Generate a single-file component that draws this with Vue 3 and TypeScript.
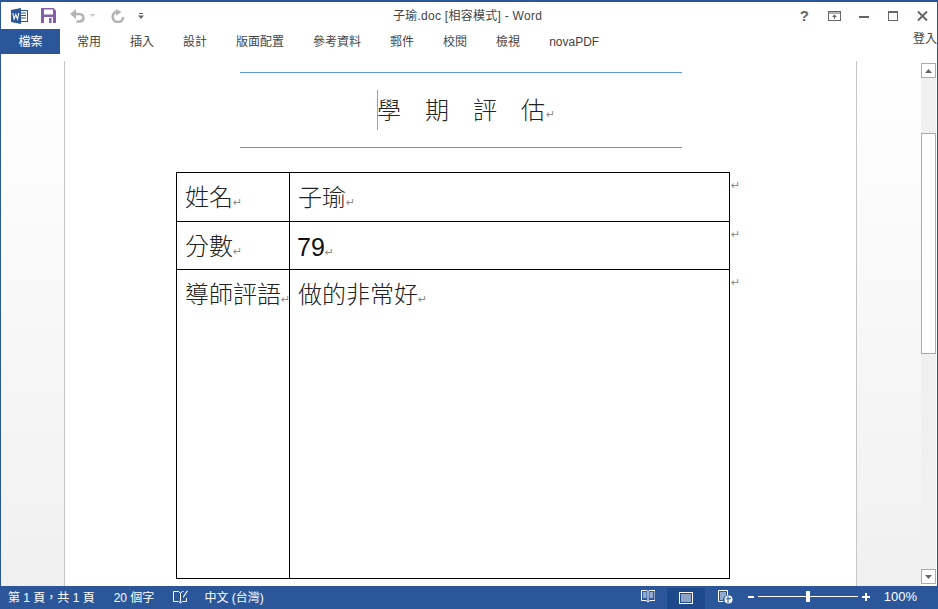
<script setup lang="ts">
const tabs: string[] = ['常用', '插入', '設計', '版面配置', '參考資料', '郵件', '校閱', '檢視', 'novaPDF']
const rows: { label: string; value: string; latin: boolean }[] = [
  { label: '姓名', value: '子瑜', latin: false },
  { label: '分數', value: '79', latin: true },
  { label: '導師評語', value: '做的非常好', latin: false },
]
const titleChars: string[] = ['學', '期', '評', '估']
</script>

<template>
  <div class="win">
    <header class="titlebar">
      <div class="qat">
        <svg class="ic-word" width="17" height="16" viewBox="0 0 17 16">
          <rect x="7.500" y="2.500" width="9" height="11" fill="#fff" stroke="#2b579a" />
          <path d="M10 5h5M10 7.500h5M10 10h5" stroke="#2b579a" />
          <path d="M0 2 10 0v16L0 14z" fill="#2b579a" />
          <path d="M1.800 5l1.300 6 1.700-4.500L6.500 11l1.300-6" fill="none" stroke="#fff" stroke-width="1.100" />
        </svg>
        <svg class="ic-save" width="15" height="15" viewBox="0 0 15 15">
          <path d="M0 0h12.500L15 2.500V15H0z" fill="#8560a8" />
          <rect x="3" y="1.500" width="9" height="5" fill="#fff" />
          <rect x="3" y="9" width="9" height="6" fill="#fff" />
          <rect x="8" y="10" width="2.500" height="5" fill="#8560a8" />
        </svg>
        <svg class="ic-undo" width="16" height="14" viewBox="0 0 16 14">
          <path d="M3 5h6.500a4 4 0 0 1 4 4v0a4 4 0 0 1-4 3.500H6.500" fill="none" stroke="#b3b3b3" stroke-width="2.600" />
          <path d="M6 0v10L0 5z" fill="#b3b3b3" />
        </svg>
        <svg class="ic-drop" width="5" height="3" viewBox="0 0 5 3"><path d="M0 0h5L2.500 3z" fill="#c4c4c4" /></svg>
        <svg class="ic-redo" width="14" height="14" viewBox="0 0 14 14">
          <path d="M6 2.500A5.300 5.300 0 1 0 12.300 8" fill="none" stroke="#b3b3b3" stroke-width="2.600" />
          <path d="M5 0v6.500l5.500-3.200z" fill="#b3b3b3" />
        </svg>
        <svg class="ic-custom" width="6" height="6" viewBox="0 0 6 6">
          <path d="M1 0h4v1H1z" fill="#666" /><path d="M0 2.500h6L3 6z" fill="#666" />
        </svg>
      </div>
      <div class="doc-title">子瑜.doc [相容模式] - Word</div>
      <div class="winctl">
        <span class="help">?</span>
        <svg class="ribbon" width="13" height="10" viewBox="0 0 13 10">
          <rect x=".5" y=".5" width="12" height="9" fill="none" stroke="#666" />
          <path d="M1 2h11" stroke="#666" />
          <path d="M6.500 3.500 9 6H4zM6 6h1v2H6z" fill="#666" />
        </svg>
        <svg width="10" height="2" viewBox="0 0 10 2" class="mini"><rect width="10" height="2" fill="#666" /></svg>
        <svg width="10" height="10" viewBox="0 0 10 10">
          <rect x=".5" y=".5" width="9" height="9" fill="none" stroke="#666" /><rect width="10" height="2" fill="#666" />
        </svg>
        <svg width="11" height="10" viewBox="0 0 11 10"><path d="M1 .5l9 9M10 .5l-9 9" stroke="#666" stroke-width="2" /></svg>
      </div>
    </header>

    <nav class="tabs">
      <div class="file-tab">檔案</div>
      <div class="tab-list">
        <span v-for="t in tabs" :key="t">{{ t }}</span>
      </div>
      <span class="signin">登入</span>
    </nav>

    <main class="workspace">
      <div class="gutter"></div>
      <section class="page">
        <div class="heading">
          <div class="caret-wrap">
            <span v-for="c in titleChars" :key="c" class="hchar">{{ c }}</span><span class="pm">↵</span>
          </div>
        </div>
        <table class="sheet">
          <tbody>
            <tr v-for="r in rows" :key="r.label">
              <td class="c1">{{ r.label }}<span class="pm">↵</span></td>
              <td class="c2" :class="{ latin: r.latin }">{{ r.value }}<span class="pm">↵</span></td>
              <td class="c3"><span class="pm">↵</span></td>
            </tr>
          </tbody>
        </table>
      </section>
      <div class="gutter right"></div>
      <aside class="scroll">
        <div class="sbtn"><svg width="7" height="4" viewBox="0 0 7 4"><path d="M3.500 0 7 4H0z" fill="#666" /></svg></div>
        <div class="track">
          <div class="thumb"></div>
        </div>
        <div class="sbtn"><svg width="7" height="4" viewBox="0 0 7 4"><path d="M0 0h7L3.500 4z" fill="#666" /></svg></div>
      </aside>
    </main>

    <footer class="status">
      <div class="st-left">
        <span class="p">第 1 頁，共 1 頁</span>
        <span class="w">20 個字</span>
        <svg class="proof" width="16" height="14" viewBox="0 0 16 14">
          <path d="M.5 1.500h5l2 1.500 2-1.500h1M.5 1.500v10h5l2 1.500 2-1.500h4V8M7.500 3v9" fill="none" stroke="#fff" />
          <path d="M15 1l-4 6-1 1 .2-1.800 3.800-5.700z" fill="#fff" />
        </svg>
        <span class="l">中文 (台灣)</span>
      </div>
      <div class="st-right">
        <svg class="v1" width="14" height="13" viewBox="0 0 14 13">
          <path d="M.5.500h5l1.500 1 1.500-1h5.500v10h-5l-2 1.500-2-1.500h-4.500z" fill="none" stroke="#fff" />
          <path d="M2 3h3.500M2 5h3.500M2 7h3.500M8.500 3H12M8.500 5H12M8.500 7H12M7 2v9" stroke="#fff" />
        </svg>
        <div class="vbtn">
          <svg width="14" height="12" viewBox="0 0 14 12">
            <rect x=".5" y=".5" width="13" height="11" fill="none" stroke="#fff" />
            <path d="M2 3h10M2 5h10M2 7h10M2 9h10" stroke="#fff" />
          </svg>
        </div>
        <svg class="v3" width="15" height="14" viewBox="0 0 15 14">
          <path d="M.5.500h9v5M.5.500v11h5" fill="none" stroke="#fff" />
          <path d="M2 3h6M2 5h6M2 7h4M2 9h3" stroke="#fff" />
          <circle cx="10.500" cy="9.500" r="4" fill="#fff" />
          <path d="M8 9c2-1 3 1 5-1M10 6v7" stroke="#2b579a" />
        </svg>
        <span class="zm"></span>
        <div class="slider"><i></i></div>
        <span class="zp"></span>
        <span class="pct">100%</span>
      </div>
    </footer>
  </div>
</template>

<style>
html, body { margin: 0; background: #fff; overflow: hidden; }
</style>

<style scoped>
.win {
  width: 938px;
  height: 609px;
  box-sizing: border-box;
  display: flex;
  flex-direction: column;
  border-top: 2px solid #2b579a;
  border-left: 1px solid #2b579a;
  border-right: 1px solid #2b579a;
  background: #fff;
  font-family: "Liberation Sans", "Noto Sans CJK TC", sans-serif;
  overflow: hidden;
}
.titlebar {
  height: 27px;
  flex: none;
  display: grid;
  grid-template-columns: 1fr auto 1fr;
  align-items: center;
}
.qat { display: flex; align-items: center; padding-left: 10px; }
.ic-save { margin-left: 13px; }
.ic-undo { margin-left: 14px; }
.ic-drop { margin-left: 4px; }
.ic-redo { margin-left: 16px; }
.ic-custom { margin-left: 13px; }
.doc-title { font-size: 12px; letter-spacing: .27px; color: #444; margin: -3px 1px 0 -2px; }
.winctl {
  display: flex;
  align-items: center;
  justify-content: flex-end;
  gap: 19px;
  padding-right: 9px;
}
.help { font: bold 15px/1 "Liberation Sans", sans-serif; color: #666; }
.ribbon { margin-right: -1px; }
.mini { margin-top: 3px; }
.tabs {
  height: 25px;
  flex: none;
  display: flex;
  align-items: center;
  font-size: 12px;
  color: #444;
  position: relative;
}
.file-tab {
  width: 59px;
  height: 25px;
  padding-bottom: 2px;
  box-sizing: border-box;
  background: #2b579a;
  color: #fff;
  display: flex;
  align-items: center;
  justify-content: center;
}
.tab-list { display: flex; align-items: baseline; gap: 29px; margin-left: 17px; line-height: 16px; margin-top: 1px; }
.signin { position: absolute; right: 0; top: 0; }
.workspace { flex: 1; min-height: 0; display: flex; }
.gutter {
  width: 63px;
  margin-top: 7px;
  background: linear-gradient(180deg, #fff 0%, #f0f0f0 100%);
  border-right: 1px solid #c6c6c6;
}
.gutter.right { border-right: 0; border-left: 1px solid #c6c6c6; width: 64px; }
.page {
  width: 791px;
  background: #fff;
  padding-top: 18px;
  box-sizing: border-box;
}
.heading {
  width: 442px;
  height: 74px;
  margin-left: 175px;
  border-top: 1px solid #5b9bd5;
  border-bottom: 1px solid #5b9bd5;
  display: flex;
  align-items: center;
  box-sizing: content-box;
}
.caret-wrap {
  border-left: 1px solid #a0a0a0;
  height: 40px;
  margin-left: 137px;
  display: flex;
  align-items: center;
  gap: 24px;
  font-size: 24px;
  font-weight: 300;
  color: #222;
  position: relative;
}
.hchar { line-height: 40px; padding-top: 2px; }
.hchar:first-child { margin-left: -1px; }
.caret-wrap .pm { margin-left: -23px; padding-top: 8px; }
.sheet {
  margin: 24px 0 0 111px;
  border-collapse: collapse;
  table-layout: fixed;
  width: 562px;
  font-size: 24px;
  font-weight: 300;
  color: #222;
}
.sheet tr:nth-child(1) { height: 49px; }
.sheet tr:nth-child(2) { height: 48px; }
.sheet tr:nth-child(3) { height: 309px; }
.sheet td { padding: 3px 0 0; vertical-align: top; line-height: 44px; white-space: nowrap; }
.c1, .c2 { border: 1px solid #000; }
.c1 { width: 113px; padding-left: 8px !important; box-sizing: border-box; }
.c2 { width: 440px; padding-left: 8px !important; box-sizing: border-box; }
.c2.latin { padding-left: 7px !important; font-size: 25px; color: #111; }
.c3 { width: 9px; }
.pm {
  font: 11px/1 "DejaVu Sans", sans-serif;
  color: #8a8a8a;
  display: inline-block;
  width: 8px;
  overflow: visible;
  vertical-align: 0;
}
.c3 .pm { vertical-align: 17px; margin-left: 1px; }
.scroll {
  width: 15px;
  flex: none;
  margin-right: 1px;
  background: #fff;
  display: flex;
  flex-direction: column;
  box-sizing: content-box;
  padding: 9px 0 2px;
}
.sbtn {
  height: 15px;
  width: 15px;
  flex: none;
  box-sizing: border-box;
  background: #fff;
  border: 1px solid #ababab;
  display: flex;
  align-items: center;
  justify-content: center;
}
.track { flex: 1; background: #f0f0f0; padding-top: 55px; }
.thumb {
  height: 221px;
  width: 15px;
  background: #fff;
  border: 1px solid #ababab;
  box-sizing: border-box;
}
.status {
  height: 23px;
  flex: none;
  margin: 0 -1px;
  padding-bottom: 2px;
  box-sizing: border-box;
  background: #2b579a;
  color: #fff;
  display: flex;
  justify-content: space-between;
  align-items: center;
  font-size: 12px;
}
.st-left { display: flex; align-items: center; padding-left: 8px; }
.w { margin-left: 19px; }
.proof { margin-left: 19px; }
.l { margin-left: 15px; }
.st-right { display: flex; align-items: center; height: 100%; padding-right: 21px; }
.vbtn {
  width: 38px;
  height: 21px;
  margin-top: 3px;
  margin-left: 12px;
  background: #1e4a8c;
  display: flex;
  align-items: center;
  justify-content: center;
}
.v3 { margin-left: 13px; }
.zm { width: 6px; height: 2px; margin-left: 15px; background: #fff; }
.slider {
  width: 100px;
  height: 1px;
  margin-left: 4px;
  background: #fff;
  position: relative;
}
.slider i {
  position: absolute;
  left: 48px;
  top: -5px;
  width: 4px;
  height: 11px;
  background: #fff;
}
.zp {
  width: 8px;
  height: 8px;
  margin-left: 4px;
  background:
    linear-gradient(#fff, #fff) center / 8px 2px no-repeat,
    linear-gradient(#fff, #fff) center / 2px 8px no-repeat;
}
.pct { margin-left: 14px; font-size: 13px; }
</style>
